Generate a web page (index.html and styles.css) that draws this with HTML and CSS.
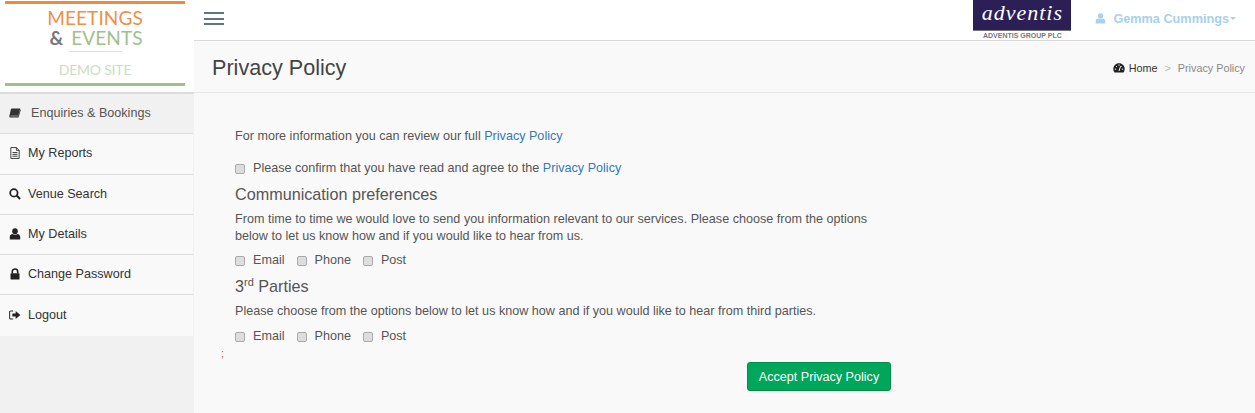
FILE: index.html
```html
<!DOCTYPE html>
<html lang="en">
<head>
<meta charset="utf-8">
<title>Privacy Policy</title>
<link rel="stylesheet" href="styles.css">
</head>
<body>
<div class="app">
  <aside class="sidebar">
    <div class="brand">
      <div class="logo">
        <div class="logo-line logo-orange">MEETINGS</div>
        <div class="logo-line logo-second"><span class="logo-amp">&amp;</span><span class="logo-green">EVENTS</span></div>
        <div class="logo-rule"></div>
        <div class="logo-demo">DEMO SITE</div>
      </div>
    </div>
    <nav class="menu">
      <a class="menu-item menu-active"><svg class="mi mi-book" viewBox="0 0 14 12"><path d="M3.2 0.5H13.3L10.9 9.2H2.2C1.6 9.2 1.4 9.8 1.9 10H10.9L13.4 1.5L14 2L11.3 11.5H1.6C0.4 11.5 0 10.4 0.3 9.2L2 1.7C2.2 1 2.6 0.5 3.2 0.5Z" fill="#333"/></svg><span>Enquiries &amp; Bookings</span></a>
      <a class="menu-item"><svg class="mi" viewBox="0 0 12 13"><path d="M1.5 .6H7.5L10.5 3.6V12.4H1.5Z M7.5 .6V3.6H10.5 M3.3 6H8.7 M3.3 8H8.7 M3.3 10H8.7" fill="none" stroke="#333" stroke-width="1"/></svg><span>My Reports</span></a>
      <a class="menu-item"><svg class="mi" viewBox="0 0 13 13"><circle cx="5.3" cy="5.3" r="4" fill="none" stroke="#222" stroke-width="1.9"/><path d="M8.2 8.2L12 12" stroke="#222" stroke-width="2.2"/></svg><span>Venue Search</span></a>
      <a class="menu-item"><svg class="mi" viewBox="0 0 12 12"><ellipse cx="6" cy="3.2" rx="2.8" ry="3" fill="#222"/><path d="M.8 11.4V9C.8 7.2 2 6 3.4 5.9C4.8 7 7.2 7 8.6 5.9C10 6 11.2 7.2 11.2 9V11.4Z" fill="#222"/></svg><span>My Details</span></a>
      <a class="menu-item"><svg class="mi" viewBox="0 0 12 12"><path d="M3.3 5.5V3.6C3.3 .2 8.7 .2 8.7 3.6V5.5" fill="none" stroke="#222" stroke-width="1.6"/><rect x="1.5" y="5.3" width="9" height="6.2" rx=".6" fill="#222"/></svg><span>Change Password</span></a>
      <a class="menu-item"><svg class="mi" viewBox="0 0 13 11"><path d="M4.5 1.2H1.8C1.1 1.2 .7 1.7 .7 2.3V8.7C.7 9.3 1.1 9.8 1.8 9.8H4.5" fill="none" stroke="#222" stroke-width="1.1"/><path d="M3.6 3.8H7.2V1.2L12.3 5.5L7.2 9.8V7.2H3.6Z" fill="#222"/></svg><span>Logout</span></a>
    </nav>
  </aside>
  <div class="main">
    <header class="topbar">
      <button class="burger" aria-label="Menu"><i></i><i></i><i></i></button>
      <div class="top-right">
        <div class="company">
          <div class="company-box">adventis</div>
          <div class="company-name">ADVENTIS GROUP PLC</div>
        </div>
        <a class="user"><svg class="user-icon" viewBox="0 0 12 12"><ellipse cx="6" cy="3.2" rx="2.8" ry="3" fill="#a9d0ea"/><path d="M.8 11.4V9C.8 7.2 2 6 3.4 5.9C4.8 7 7.2 7 8.6 5.9C10 6 11.2 7.2 11.2 9V11.4Z" fill="#a9d0ea"/></svg><span>Gemma Cummings</span><i class="caret"></i></a>
      </div>
    </header>
    <div class="titlebar">
      <h1>Privacy Policy</h1>
      <div class="crumbs">
        <svg class="gauge" viewBox="0 0 12 10"><path d="M6 .3C2.8 .3 .3 2.8 .3 6C.3 7.3 .7 8.5 1.4 9.5H10.6C11.3 8.5 11.7 7.3 11.7 6C11.7 2.8 9.2 .3 6 .3Z" fill="#222"/><path d="M6 8L7.6 3.2M1.8 6.2H3.2M3 3L4 4M6 1.4V2.8M10.2 6.2H8.8M9 3L8.4 3.6" stroke="#f9f9f9" stroke-width="1"/></svg>
        <a class="crumb-home">Home</a><span class="crumb-sep">&gt;</span><span class="crumb-cur">Privacy Policy</span>
      </div>
    </div>
    <main class="content">
      <p class="intro">For more information you can review our full <a class="link">Privacy Policy</a></p>
      <label class="check-line confirm"><input type="checkbox"><span>Please confirm that you have read and agree to the <a class="link">Privacy Policy</a></span></label>
      <h2>Communication preferences</h2>
      <p class="desc">From time to time we would love to send you information relevant to our services. Please choose from the options below to let us know how and if you would like to hear from us.</p>
      <div class="opts">
        <label class="check-line"><input type="checkbox"><span>Email</span></label>
        <label class="check-line"><input type="checkbox"><span>Phone</span></label>
        <label class="check-line"><input type="checkbox"><span>Post</span></label>
      </div>
      <h2 class="h-parties">3<sup>rd</sup> Parties</h2>
      <p class="desc desc-single">Please choose from the options below to let us know how and if you would like to hear from third parties.</p>
      <div class="opts opts-last">
        <label class="check-line"><input type="checkbox"><span>Email</span></label>
        <label class="check-line"><input type="checkbox"><span>Phone</span></label>
        <label class="check-line"><input type="checkbox"><span>Post</span></label>
      </div>
      <div class="stray">;</div>
      <div class="actions"><button class="accept">Accept Privacy Policy</button></div>
    </main>
  </div>
</div>
</body>
</html>
```
FILE: styles.css
```css
* { box-sizing: border-box; }
html, body { margin: 0; height: 100%; }
body {
  font-family: "Liberation Sans", Arial, sans-serif;
  font-size: 12.6px;
  color: #555;
  overflow: hidden;
}
.app {
  display: grid;
  grid-template-columns: 194px 1fr;
  height: 413px;
}
.sidebar { background: #f1f1f1; }
.brand {
  height: 94px;
  background: #fff;
  padding: 1px 9px 0 5px;
  border-bottom: 2px solid #dcdcdc;
}
.logo {
  height: 85px;
  border-top: 3px solid #f08a3c;
  border-bottom: 3px solid #9fc08a;
  font-family: Lato, sans-serif;
  text-align: center;
  display: flex;
  flex-direction: column;
  align-items: center;
  padding-top: 4px;
}
.logo-line { font-size: 19px; line-height: 20px; height: 20px; letter-spacing: .1px; }
.logo-orange { color: #ec9149; }
.logo-second { display: flex; gap: 8px; padding-left: 2px; }
.logo-amp { color: #77787b; font-weight: 700; }
.logo-green { color: #a0c08c; }
.logo-rule { width: 53px; height: 1px; background: #d9e6d0; margin-top: 3px; }
.logo-demo { font-size: 14px; line-height: 16px; color: #c9dec4; margin-top: 10px; letter-spacing: -.2px; }
.menu { display: flex; flex-direction: column; }
.menu-item {
  height: 40.3px;
  display: flex;
  align-items: center;
  gap: 7px;
  padding: 0 0 1px 9px;
  background: #f9f9f9;
  border-bottom: 1px solid #dcdcdc;
  color: #333;
  margin-right: 1px;
}
.menu-item:last-child { border-bottom: 0; }
.menu-active { background: #f1f1f1; color: #555; gap: 10px; }
.mi { width: 12px; height: 12px; flex: none; }
.mi-book { width: 12px; height: 10px; }
.main { display: flex; flex-direction: column; background: #f9f9f9; min-width: 0; }
.topbar {
  height: 41px;
  background: #fff;
  border-bottom: 1px solid #d9d9d9;
  display: flex;
  justify-content: space-between;
  align-items: flex-start;
  padding-left: 10px;
}
.burger {
  width: 20px;
  margin-top: 12px;
  padding: 0;
  border: 0;
  background: none;
  display: flex;
  flex-direction: column;
  gap: 3.5px;
}
.burger i { display: block; height: 2px; background: #5f7484; }
.top-right { display: flex; align-items: flex-start; padding-right: 19px; }
.company { width: 98px; text-align: center; }
.company-box {
  height: 31px;
  background: #2b1f56;
  color: #fff;
  font-family: "Liberation Serif", serif;
  font-style: italic;
  font-size: 22px;
  line-height: 26px;
  letter-spacing: 1px;
  border-bottom: 1px solid #777;
}
.company-name { font-size: 7px; line-height: 9px; color: #777; font-weight: 700; white-space: nowrap; }
.user {
  display: flex;
  align-items: center;
  margin-left: 24px;
  height: 37px;
  color: #a9d0ea;
  font-size: 12.7px;
  font-weight: 700;
}
.user-icon { width: 11px; height: 11px; margin-right: 7px; }
.caret {
  width: 0;
  height: 0;
  border-left: 3.5px solid transparent;
  border-right: 3.5px solid transparent;
  border-top: 3.5px solid #a9d0ea;
  margin-left: 1px;
}
.titlebar {
  height: 52px;
  border-bottom: 1px solid #e6e6e6;
  display: flex;
  justify-content: space-between;
  align-items: center;
  padding: 2px 10px 0 18px;
}
h1 { margin: 0; font-size: 21.6px; font-weight: 400; color: #444; }
.crumbs { display: flex; align-items: center; font-size: 10.8px; }
.gauge { width: 12px; height: 10px; margin-right: 4px; }
.crumb-home { color: #333; }
.crumb-sep { color: #bbb; margin: 0 7px; }
.crumb-cur { color: #888; }
.content { padding: 35px 0 0 41px; color: #555; }
p { margin: 0; }
.intro { line-height: 17px; }
.link { color: #337ab7; }
.check-line { display: inline-flex; align-items: center; line-height: 17px; }
.check-line input {
  appearance: none;
  width: 10px;
  height: 10px;
  margin: 1px 8px 0 0;
  background: #ddd;
  border: 1px solid #aaa;
  border-radius: 2px;
  flex: none;
}
.confirm { display: flex; margin-top: 15px; }
h2 { margin: 8px 0 0; font-size: 16.2px; line-height: 19px; font-weight: 400; color: #555; }
.desc { width: 650px; margin-top: 7px; line-height: 17px; }
.desc-single { margin-top: 7px; width: 700px; }
.opts { display: flex; gap: 12px; margin-top: 7px; }
.opts-last { margin-top: 8px; }
.h-parties { margin-top: 8px; }
sup { font-size: 11px; line-height: 0; }
.stray { color: #c0603a; line-height: 12px; margin: 2px 0 0 -14px; height: 12px; font-size: 11px; }
.actions { padding-left: 512px; }
.accept {
  display: block;
  width: 144px;
  height: 29px;
  margin-top: 3px;
  background: #00a65a;
  border: 1px solid #008d4c;
  border-radius: 3px;
  color: #fff;
  font: 12.6px "Liberation Sans", Arial, sans-serif;
}
```
